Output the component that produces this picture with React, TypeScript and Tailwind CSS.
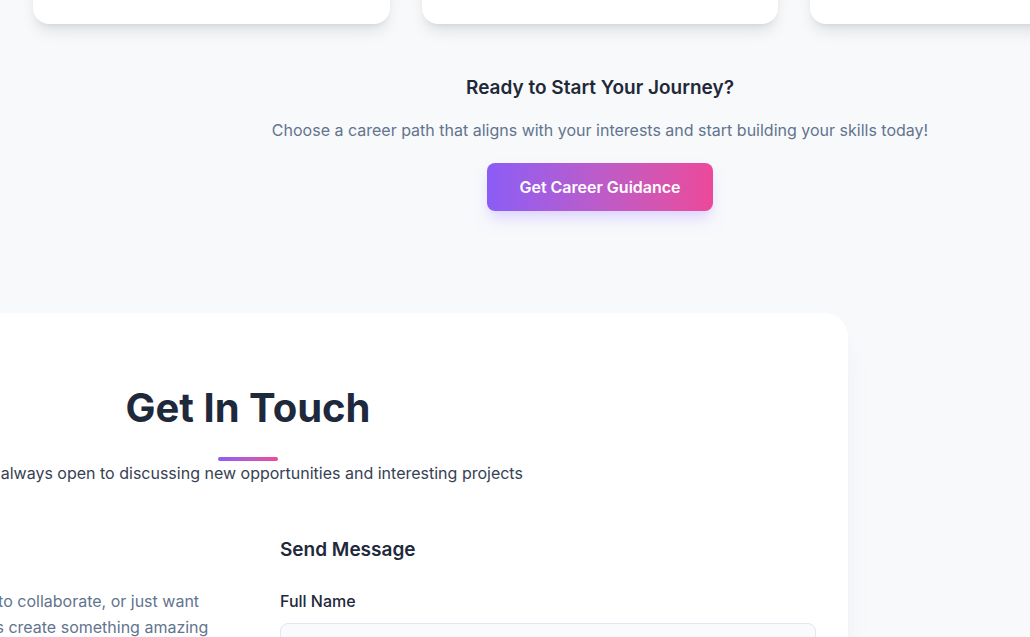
const FONT = { fontFamily: 'Inter, "Noto Sans", sans-serif' }

const INPUT_CLASS =
  'w-full border border-slate-200 rounded-lg bg-slate-50 px-4 py-3 text-slate-900 text-base ' +
  'focus:outline-none focus:ring-2 focus:ring-violet-400'

function PathCard() {
  return <div className="h-[224px] rounded-2xl bg-white shadow-lg" />
}

export default function App() {
  return (
    <div className="h-[637px] w-[1030px] overflow-hidden bg-[#f8f9fb]" style={FONT}>
      {/* career paths tail */}
      <section className="w-[1200px]">
        <div className="-mt-[200px] grid grid-cols-3 gap-8 px-[33px]">
          <PathCard />
          <PathCard />
          <PathCard />
        </div>

        <div className="mt-[50px] flex flex-col items-center text-center">
          <h3 className="text-[19px] font-semibold text-[#1f2937] leading-7">Ready to Start Your Journey?</h3>
          <p className="mt-4 text-base text-slate-500">
            Choose a career path that aligns with your interests and start building your skills today!
          </p>
          <button className="mt-[21px] h-12 px-8 rounded-lg bg-gradient-to-r from-[#8b5cf6] to-[#ec4899] text-white font-semibold shadow-lg shadow-violet-200">
            Get Career Guidance
          </button>
        </div>
      </section>

      {/* contact */}
      <section className="mt-[102px] -ml-[352px] w-[1200px] rounded-3xl bg-white shadow-xl shadow-slate-200/60 px-8 pt-[75px] pb-16">
        <div className="flex flex-col items-center text-center">
          <h2 className="text-[40px] font-bold text-[#1e293b] leading-10">Get In Touch</h2>
          <div className="mt-[29px] h-1 w-[60px] rounded-full bg-gradient-to-r from-[#8b5cf6] to-[#ec4899]" />
          <p className="text-base text-gray-700">
            I&apos;m always open to discussing new opportunities and interesting projects
          </p>
        </div>

        <div className="mt-[51px] grid grid-cols-2 gap-16">
          <div>
            <h3 className="text-xl font-semibold text-[#1e293b] leading-7 mb-6">Let&apos;s Connect</h3>
            <p className="text-base leading-[26px] text-slate-500">
              Whether you have a project in mind, want to collaborate, or just want
              <br />
              to say hello? Feel free to get in touch. Let&apos;s create something amazing
              <br />
              together!
            </p>
          </div>

          <form className="flex flex-col">
            <h3 className="text-[19px] font-semibold text-[#1e293b] leading-7 mb-[25px]">Send Message</h3>
            <label className="text-base font-medium text-[#1e293b] mb-2.5">Full Name</label>
            <input className={INPUT_CLASS} />
          </form>
        </div>
      </section>
    </div>
  )
}
